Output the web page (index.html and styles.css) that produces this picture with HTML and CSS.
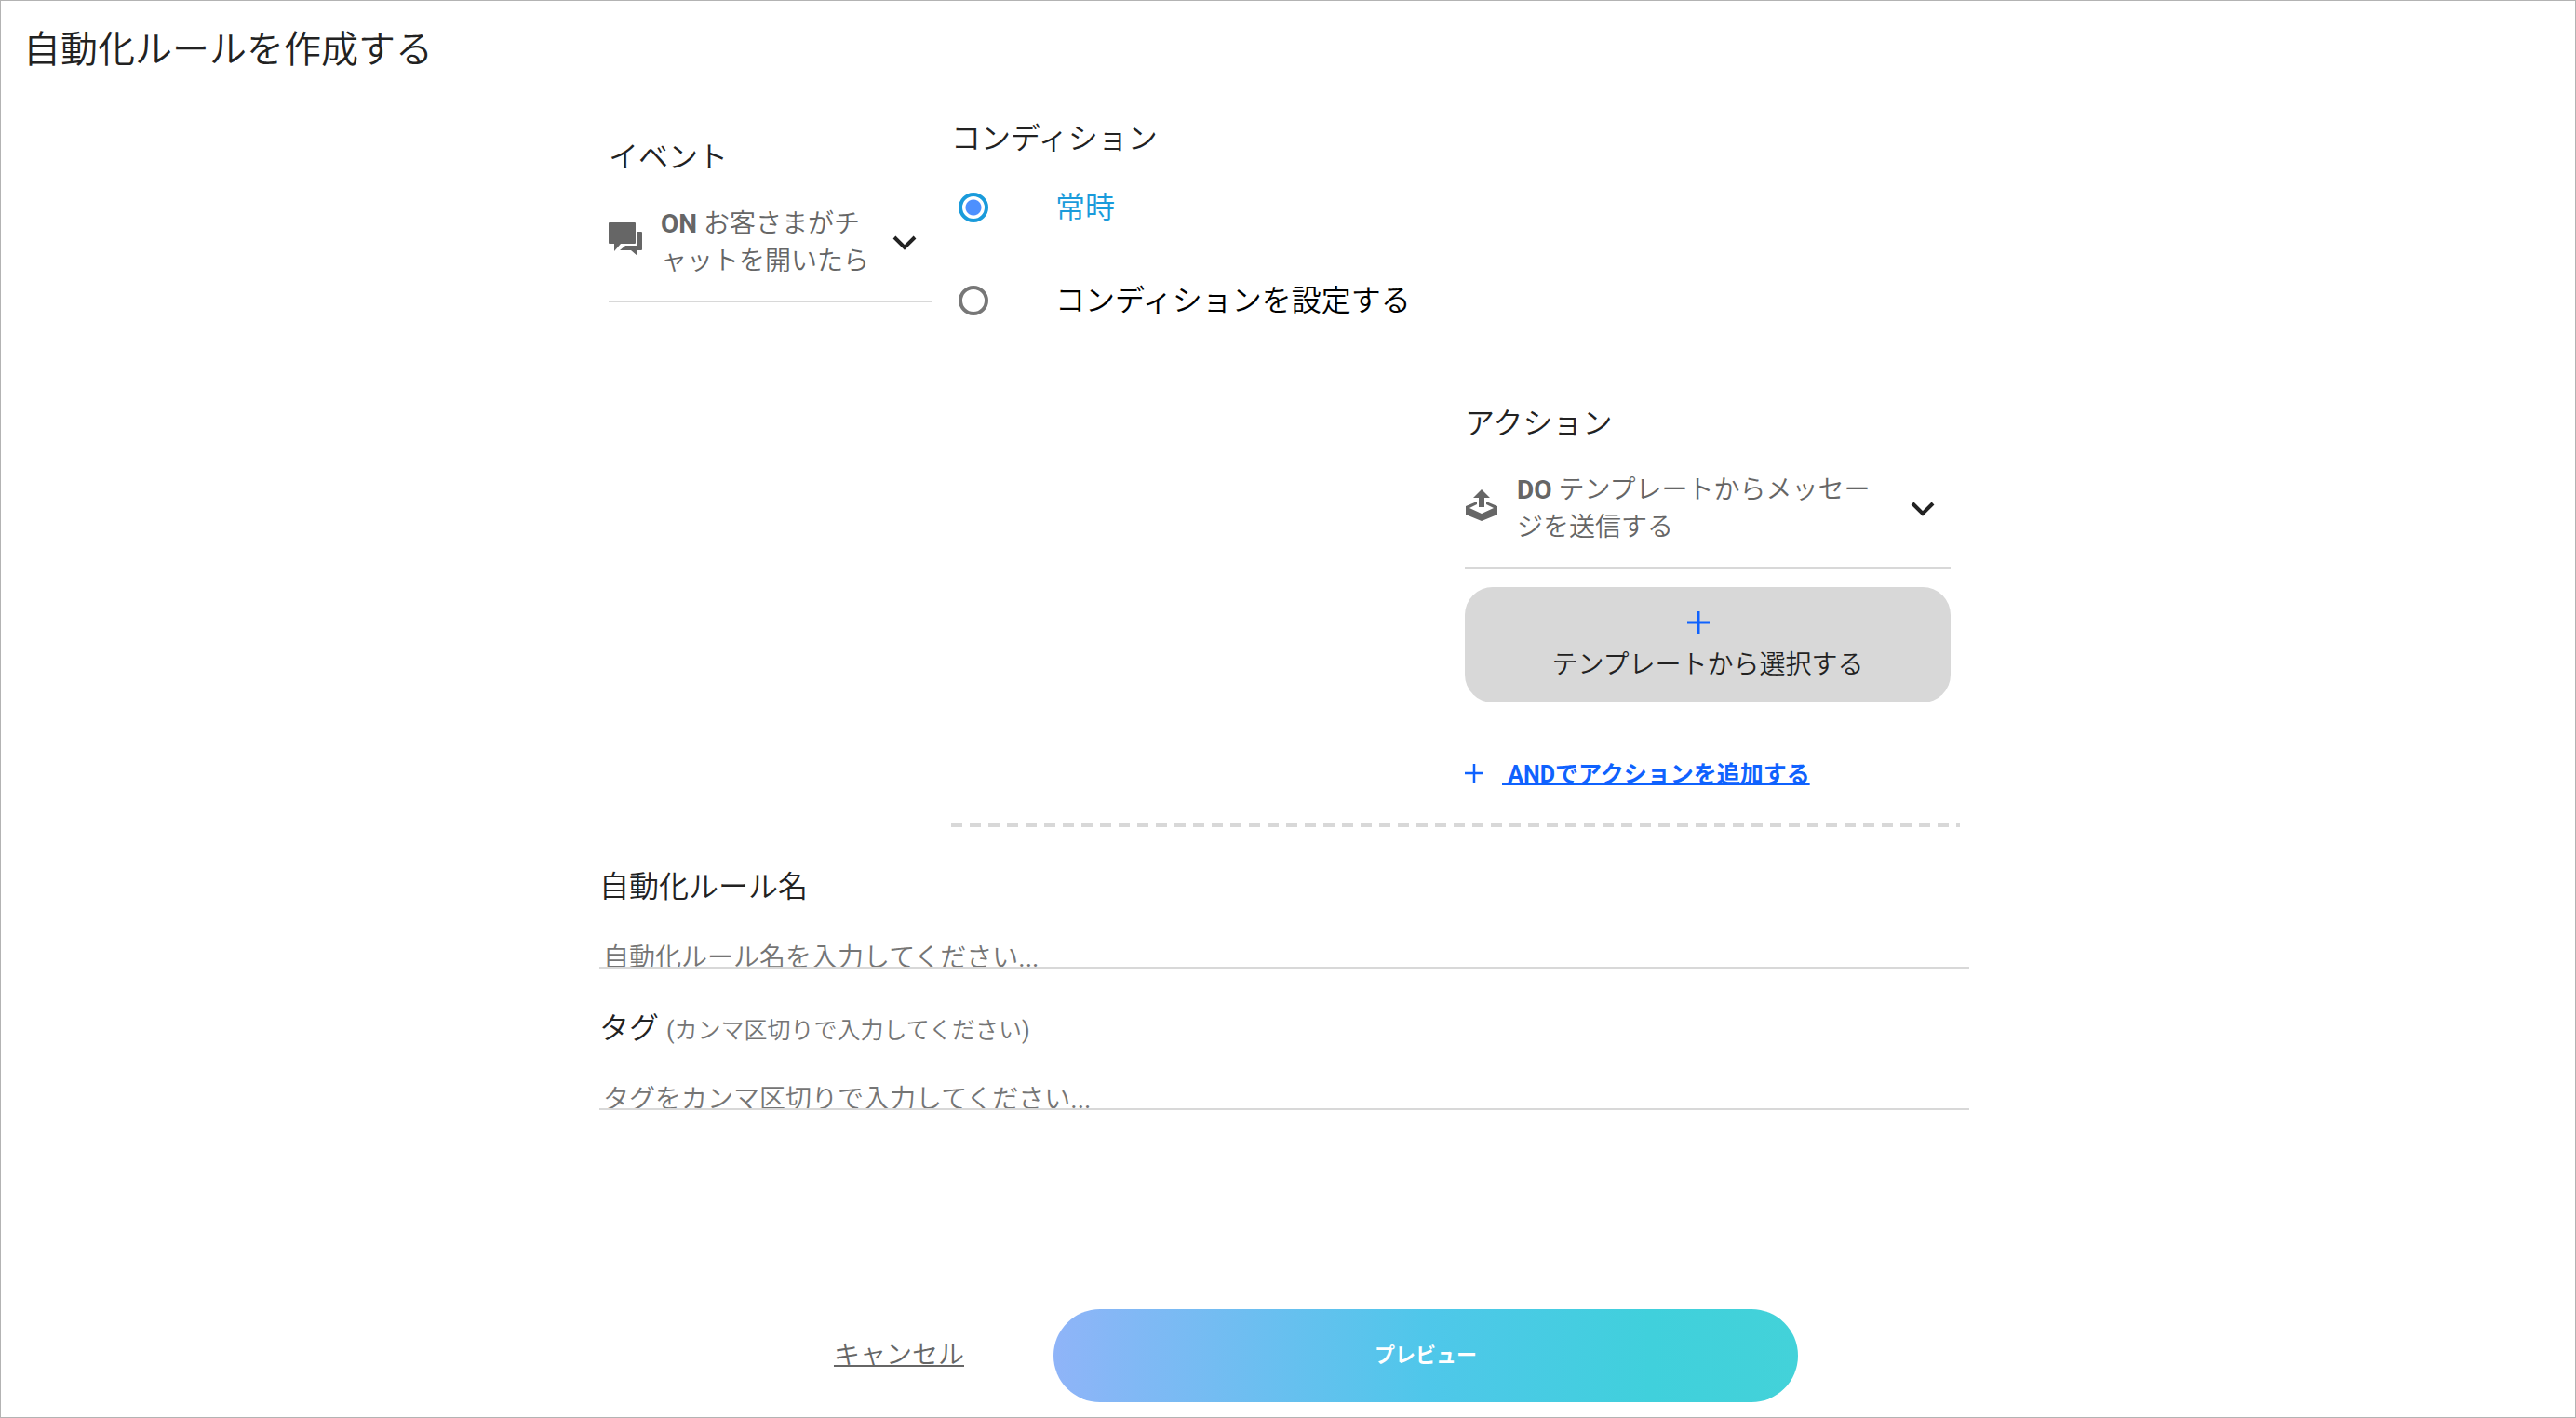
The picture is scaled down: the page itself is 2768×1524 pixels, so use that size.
FILE: index.html
```html
<!DOCTYPE html>
<html lang="ja">
<head>
<meta charset="utf-8">
<meta name="viewport" content="width=device-width, initial-scale=1">
<title>自動化ルールを作成する</title>
<link rel="stylesheet" href="styles.css">
</head>
<body>
<main class="page">
  <h1 class="page-title">自動化ルールを作成する</h1>

  <form class="rule-form">
    <div class="rule-grid">
      <section class="event">
        <h2 class="heading">イベント</h2>
        <button type="button" class="picker">
          <svg class="picker-icon" viewBox="0 0 36 36" aria-hidden="true">
            <path fill="#666" d="M1 0h27q1 0 1 1v21q0 1-1 1H13L6 31v-8H1q-1 0-1-1V1q0-1 1-1z"/>
            <path fill="#666" d="M31 10h4q1 0 1 1v18q0 1-1 1h-4v6l-7-6H12l6-5h12q1 0 1-1z"/>
          </svg>
          <span class="picker-text"><b>ON</b> お客さまがチャットを開いたら</span>
          <svg class="chevron" viewBox="0 0 28 18" aria-hidden="true"><path d="M3 3l11 11L25 3"/></svg>
        </button>
      </section>

      <div class="flow">
        <fieldset class="condition">
          <legend class="heading">コンディション</legend>
          <label class="option"><input type="radio" name="condition" class="radio" checked><span>常時</span></label>
          <label class="option"><input type="radio" name="condition" class="radio"><span>コンディションを設定する</span></label>
        </fieldset>

        <section class="action">
          <h2 class="heading">アクション</h2>
          <button type="button" class="picker">
            <svg class="picker-icon" viewBox="0 0 36 36" aria-hidden="true">
              <path fill="#666" d="M18 1l9 9h-6v10h-6V10H9z"/>
              <path fill="#666" fill-rule="evenodd" d="M13 14v3L5 21l13 6 13-6-8-4v-3l12 5v9l-17 7L1 28V19z"/>
            </svg>
            <span class="picker-text"><b>DO</b> テンプレートからメッセージを送信する</span>
            <svg class="chevron" viewBox="0 0 28 18" aria-hidden="true"><path d="M3 3l11 11L25 3"/></svg>
          </button>
          <button type="button" class="template-button">
            <svg class="plus" viewBox="0 0 24 24" aria-hidden="true"><path d="M12 0v24M0 12h24"/></svg>
            <span>テンプレートから選択する</span>
          </button>
          <a href="#" class="add-action">
            <svg class="plus plus-small" viewBox="0 0 24 24" aria-hidden="true"><path d="M12 0v24M0 12h24"/></svg>
            <span class="add-label">&nbsp;ANDでアクションを追加する</span>
          </a>
        </section>
      </div>
    </div>

    <div class="field">
      <label class="heading" for="rule-name">自動化ルール名</label>
      <input class="text-input" id="rule-name" type="text" placeholder="自動化ルール名を入力してください...">
    </div>
    <div class="field">
      <label class="heading" for="rule-tags">タグ <span class="hint">(カンマ区切りで入力してください)</span></label>
      <input class="text-input" id="rule-tags" type="text" placeholder="タグをカンマ区切りで入力してください...">
    </div>

    <div class="buttons">
      <button type="button" class="cancel">キャンセル</button>
      <button type="submit" class="preview">プレビュー</button>
    </div>
  </form>
</main>
</body>
</html>
```
FILE: styles.css
```css
* {
  box-sizing: border-box;
}

body {
  margin: 0;
  background: #fff;
  color: #222;
  font-family: Roboto, "Noto Sans CJK JP DemiLight", "Noto Sans CJK JP", sans-serif;
  font-size: 28px;
  font-weight: 400;
  line-height: 40px;
}

button,
input {
  font: inherit;
}

button {
  padding: 0;
  border: 0;
  background: none;
  color: inherit;
  cursor: pointer;
}

b {
  font-weight: 700;
}

.page {
  min-height: 100vh;
  padding: 24px 32px 16px 24px;
  border: 1px solid #b3b3b3;
}

.page-title {
  margin: 0;
  font-size: 40px;
  line-height: 58px;
  font-weight: inherit;
}

.heading {
  display: block;
  margin: 0;
  padding: 0;
  font-size: 32px;
  line-height: 48px;
  font-weight: inherit;
}

.rule-form {
  max-width: 1472px;
  margin: 42px auto 0;
}

.rule-grid {
  display: grid;
  grid-template-columns: 348px 1fr;
  gap: 20px;
  padding: 0 10px;
}

.event {
  padding-top: 20px;
}

.picker {
  display: flex;
  align-items: center;
  width: 100%;
  margin-top: 28px;
  padding-bottom: 22px;
  border-bottom: 2px solid #d8d8d8;
  color: #666;
  text-align: left;
}

.picker-icon {
  flex: none;
  width: 36px;
  height: 36px;
  margin: 0 20px 8px 0;
}

.picker-text {
  flex: 1;
  margin-right: 16px;
}

.chevron {
  flex: none;
  width: 28px;
  height: 18px;
  margin-right: 16px;
  fill: none;
  stroke: #222;
  stroke-width: 4;
}

.flow {
  display: flex;
  flex-direction: column;
  padding-bottom: 36px;
  background: repeating-linear-gradient(90deg, #d8d8d8 0 12px, transparent 12px 20px) bottom / 100% 4px no-repeat;
}

.condition {
  margin: 0;
  padding: 0;
  border: 0;
}

.option {
  display: flex;
  align-items: center;
  height: 100px;
  color: #000;
  font-size: 32px;
}

.option:has(:checked) {
  color: #1a9bdb;
}

.radio {
  appearance: none;
  width: 32px;
  height: 32px;
  margin: 0 72px 0 8px;
  border: 4px solid #777;
  border-radius: 50%;
}

.radio:checked {
  border-color: #1a9bdb;
  background: radial-gradient(circle, #4d90fe 0 8px, transparent 9px);
}

.action {
  width: 522px;
  margin: 58px 10px 0 auto;
}

.template-button {
  display: flex;
  flex-direction: column;
  align-items: center;
  gap: 14px;
  width: 100%;
  margin-top: 20px;
  padding: 26px 0 20px;
  border-radius: 30px;
  background: #d8d8d8;
}

.plus {
  flex: none;
  width: 24px;
  height: 24px;
  margin-right: 20px;
  stroke: #0f62fe;
  stroke-width: 3;
}

.plus-small {
  width: 20px;
  height: 20px;
  margin-bottom: 4px;
}

.add-action {
  display: flex;
  align-items: center;
  margin-top: 58px;
  color: #0f62fe;
  font-family: Roboto, "Noto Sans CJK JP", sans-serif;
  font-size: 25px;
  font-weight: 700;
  text-decoration: none;
}

.add-label {
  text-decoration: underline;
  text-decoration-thickness: 2px;
}

.field {
  margin-top: 40px;
}

.text-input {
  display: block;
  width: 100%;
  height: 64px;
  padding: 42px 4px 0;
  border: 0;
  border-bottom: 2px solid #d8d8d8;
  background: none;
  color: #222;
}

.text-input::placeholder {
  color: #757575;
  opacity: 1;
}

.hint {
  color: #757575;
  font-size: 25px;
  line-height: 1;
}

.buttons {
  display: flex;
  align-items: center;
  justify-content: center;
  gap: 96px;
  margin-top: 214px;
  padding-left: 68px;
}

.cancel {
  color: #666;
  text-decoration: underline;
  text-decoration-thickness: 2px;
}

.preview {
  width: 800px;
  height: 100px;
  border-radius: 50px;
  background: linear-gradient(90deg, #8fb4f8, #4fc7ea 50%, #40d0dc 80%, #43d2d9);
  color: #fff;
  font-family: Roboto, "Noto Sans CJK JP", sans-serif;
  font-size: 22px;
  font-weight: 700;
}
```
